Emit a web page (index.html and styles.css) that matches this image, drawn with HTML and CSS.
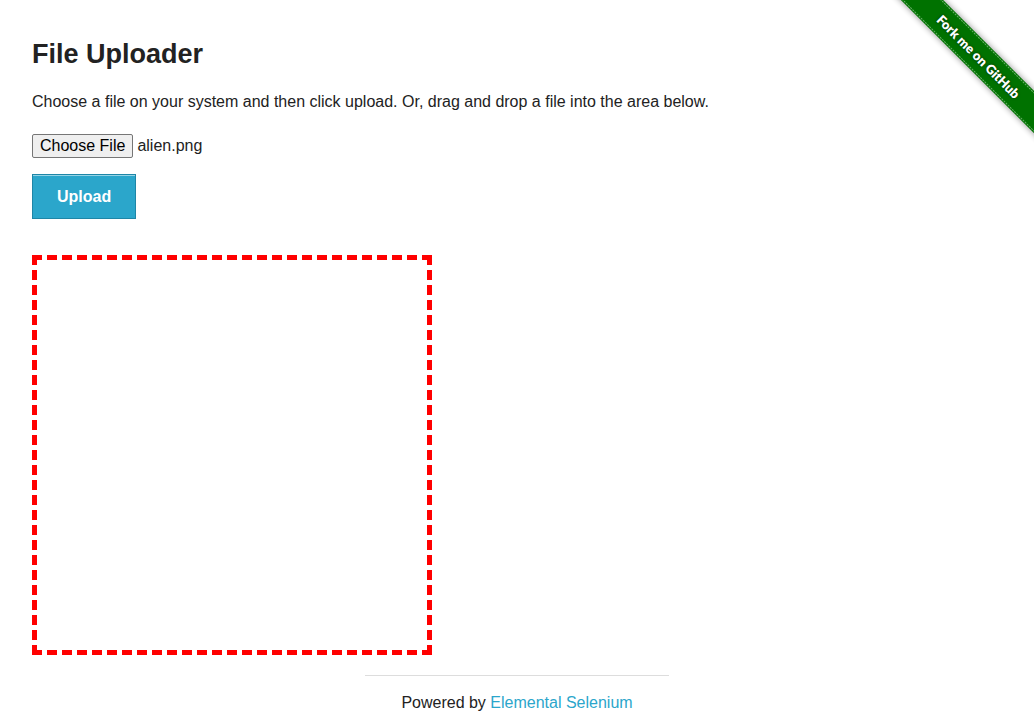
FILE: index.html
```html
<!DOCTYPE html>
<html lang="en">
<head>
<meta charset="utf-8">
<meta name="viewport" content="width=device-width, initial-scale=1">
<title>File Uploader</title>
<link rel="stylesheet" href="styles.css">
</head>
<body>
<a class="ribbon" href="#" aria-label="Fork me on GitHub">
  <svg width="150" height="150" viewBox="0 0 150 150">
    <g transform="translate(38 0) rotate(45)">
      <rect class="ribbon-band" x="-60" y="-15" width="320" height="30"/>
      <path class="ribbon-stitch" d="M-60 -13.5H260M-60 13.5H260"/>
      <text class="ribbon-text" x="80" y="5" text-anchor="middle">Fork me on GitHub</text>
    </g>
  </svg>
</a>
<main class="content">
  <h1 class="title">File Uploader</h1>
  <p class="intro">Choose a file on your system and then click upload. Or, drag and drop a file into the area below.</p>
  <form class="upload-form">
    <div class="file-row">
      <input class="file-input" id="file-upload" type="file">
      <label class="file-button" for="file-upload">Choose File</label>
      <span class="file-name">alien.png</span>
    </div>
    <button class="upload-button" type="button">Upload</button>
  </form>
  <div class="drop-area"></div>
</main>
<footer class="footer">
  <hr class="rule">
  <div class="powered">Powered by <a class="link" href="#">Elemental Selenium</a></div>
</footer>
</body>
</html>
```
FILE: styles.css
```css
* {
  box-sizing: border-box;
}

body {
  margin: 0;
  position: relative;
  background: #fff;
  color: #222;
  font: 16px/24px "Liberation Sans", Arial, sans-serif;
}

.ribbon {
  position: absolute;
  top: 0;
  right: 0;
}

.ribbon svg {
  display: block;
}

.ribbon-band {
  fill: #007200;
  filter: drop-shadow(0 0 3px rgba(0, 0, 0, .45));
}

.ribbon-stitch {
  fill: none;
  stroke: #6aae6a;
  stroke-width: 1;
  stroke-dasharray: 2 1;
}

.ribbon-text {
  fill: #fff;
  font: 800 13px Lato, "Open Sans", sans-serif;
  text-shadow: 0 0 3px rgba(0, 0, 0, .6);
}

.content {
  padding: 34px 32px 0;
}

.title {
  margin: 0 0 15px;
  font-size: 27px;
  line-height: 41px;
}

.intro {
  margin: 0 0 20px;
}

.upload-form {
  margin-bottom: 36px;
}

.file-row {
  display: flex;
  align-items: center;
  gap: 4px;
  margin-bottom: 16px;
}

.file-input {
  position: absolute;
  width: 1px;
  height: 1px;
  opacity: 0;
}

.file-button {
  padding: 0 7px;
  border: 1px solid #767676;
  border-radius: 2px;
  background: #efefef;
  color: #000;
  line-height: 22px;
}

.upload-button {
  display: block;
  padding: 14px 24px 13px;
  border: 1px solid #1e86a7;
  background: #2ba6cb;
  box-shadow: inset 0 1px 0 rgba(255, 255, 255, .5);
  color: #fff;
  font: bold 16px/16px "Liberation Sans", Arial, sans-serif;
}

.drop-area {
  width: 100%;
  max-width: 400px;
  height: 400px;
  border: 5px dashed #f00;
}

.footer {
  width: 33.333%;
  margin: 20px auto 0;
  padding: 0 20px;
  text-align: center;
}

.rule {
  margin: 0 0 18px;
  border: 0;
  border-top: 1px solid #ddd;
}

.powered {
  line-height: 17px;
}

.link {
  color: #2ba6cb;
  text-decoration: none;
}
```
